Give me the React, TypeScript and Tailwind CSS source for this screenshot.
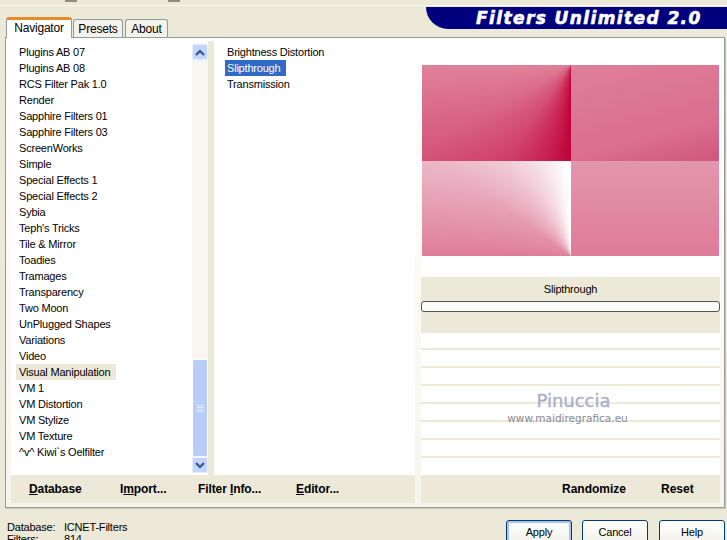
import React from "react";

const FILTERS = [
  "Plugins AB 07", "Plugins AB 08", "RCS Filter Pak 1.0", "Render", "Sapphire Filters 01", "Sapphire Filters 03",
  "ScreenWorks", "Simple", "Special Effects 1", "Special Effects 2", "Sybia", "Teph's Tricks", "Tile & Mirror",
  "Toadies", "Tramages", "Transparency", "Two Moon", "UnPlugged Shapes", "Variations", "Video",
  "Visual Manipulation", "VM 1", "VM Distortion", "VM Stylize", "VM Texture", "^v^ Kiwi`s Oelfilter",
];

const Chevron = ({ up }: { up?: boolean }) => (
  <svg width="10" height="7" viewBox="0 0 10 7" fill="none" stroke="#34558f" strokeWidth="2.2">
    <path d={up ? "M1 6l4-4 4 4" : "M1 1l4 4 4-4"} />
  </svg>
);

const ScrollBtn = ({ up }: { up?: boolean }) => (
  <div className="h-4 w-4 shrink-0 flex items-center justify-center rounded-[2px] border border-[#e8eefc] bg-[#c3d5fb]">
    <Chevron up={up} />
  </div>
);

const Tab = ({ label, active, className }: { label: string; active?: boolean; className: string }) =>
  active ? (
    <div className={`${className} h-[21px] relative z-10 -mb-px flex items-center justify-center rounded-t-[3px] border-x border-[#919b9c] border-t-[3px] border-t-[#e68b2c] bg-white pb-[2px]`}>
      {label}
    </div>
  ) : (
    <div className={`${className} h-[18px] flex items-center justify-center rounded-t-[3px] border-x border-t border-[#919b9c] bg-[#f3f2ea]`}>
      {label}
    </div>
  );

const Key = ({ children }: { children: React.ReactNode }) => <span className="underline">{children}</span>;

const Btn = ({ label, primary, className }: { label: string; primary?: boolean; className?: string }) => (
  <div
    className={`${className ?? ""} w-[66px] h-[24px] shrink-0 flex items-center justify-center rounded-[3px] border border-[#003c74] bg-[linear-gradient(#ffffff,#f2f1ea)] ${
      primary ? "shadow-[inset_0_0_0_2px_#a9c4ea]" : ""
    }`}
  >
    {label}
  </div>
);

export default function App() {
  return (
    <div className="w-[727px] h-[540px] overflow-hidden bg-[#ece9d8] text-[11px] tracking-[-0.2px] leading-4 text-black font-['Liberation_Sans',Arial,sans-serif]">
      {/* strip left of the previous window */}
      <div className="h-[7px] flex flex-col">
        <div className="h-[2px] flex">
          <div className="w-[65px]" />
          <div className="w-[12px] bg-[#8e8c80]" />
          <div className="w-[91px]" />
          <div className="w-[12px] bg-[#8e8c80]" />
        </div>
        <div className="h-[3px]" />
        <div className="h-px bg-[#f7f6ef]" />
      </div>

      <div className="h-[30px] flex justify-between items-start">
        <div className="h-[30px] pl-[6px] flex items-end gap-px text-[12px]">
          <Tab label="Navigator" active className="w-[66px]" />
          <Tab label="Presets" className="w-[50px]" />
          <Tab label="About" className="w-[43px] ml-px" />
        </div>
        <div className="w-[301px] h-[22px] rounded-bl-[24px] bg-[#00007f] flex items-center pl-[50px] text-white italic font-bold text-[17px] tracking-[1.4px] [-webkit-text-stroke:0.6px_white] font-['DejaVu_Sans',sans-serif] whitespace-nowrap">
          Filters Unlimited 2.0
        </div>
      </div>

      <div className="ml-[5px] w-[720px] h-[471px] border border-[#919b9c] shadow-[1px_1px_0_#c9c7b8] bg-[linear-gradient(#ffffff,#f6f5ec)] pl-[5px] pr-[4px] pt-[3px] flex gap-[6px]">
        <div className="w-[404px] flex flex-col">
          <div className="h-[434px] flex bg-white">
            <div className="w-[181px] pt-[3px] pl-[5px]">
              {FILTERS.map((f) => (
                <div
                  key={f}
                  className={`h-4 pl-[3px] whitespace-nowrap ${f === "Visual Manipulation" ? "bg-[#ece9d8] w-[100px]" : ""}`}
                >
                  {f}
                </div>
              ))}
            </div>
            <div className="w-[16px] mt-[3px] mb-[2px] flex flex-col bg-[#f7f6f0]">
              <ScrollBtn up />
              <div className="h-[299px]" />
              <div className="flex-1 rounded-[2px] border border-white bg-[#b9cdf9] flex flex-col items-center justify-center gap-px">
                <div className="w-[7px] h-px bg-[#e6edfd]" />
                <div className="w-[7px] h-px bg-[#e6edfd]" />
                <div className="w-[7px] h-px bg-[#e6edfd]" />
                <div className="w-[7px] h-px bg-[#e6edfd]" />
              </div>
              <ScrollBtn />
            </div>
            <div className="w-[6px] bg-[#ece9d8]" />
            <div className="flex-1 pt-[3px] pl-[11px]">
              <div className="h-4 pl-[2px]">Brightness Distortion</div>
              <div className="h-4 w-[61px] pl-[2px] bg-[#316ac5] text-white">Slipthrough</div>
              <div className="h-4 pl-[2px]">Transmission</div>
            </div>
          </div>
          <div className="h-[28px] bg-[#ece9d8] flex items-center font-bold text-[12px] tracking-[-0.1px]">
            <span className="ml-[18px] w-[91px]"><Key>D</Key>atabase</span>
            <span className="w-[78px]">I<Key>m</Key>port...</span>
            <span className="w-[98px]">Filter <Key>I</Key>nfo...</span>
            <span><Key>E</Key>ditor...</span>
          </div>
        </div>

        <div className="w-[299px] flex flex-col relative">
          <div className="h-[24px] bg-white" />
          <div className="mx-px h-[191px] grid grid-cols-[149px_148px] grid-rows-[96px_95px]">
            <div className="bg-[conic-gradient(from_180deg_at_100%_0%,#c00038_0deg,rgba(192,0,56,0.7)_12deg,rgba(192,0,56,0.3)_35deg,rgba(192,0,56,0.08)_60deg,rgba(192,0,56,0)_85deg,rgba(192,0,56,0)_360deg),linear-gradient(#e08099,#d65a80)]" />
            <div className="bg-[linear-gradient(165deg,#df7f9b,#da6e90_70%,#d0557c)]" />
            <div className="bg-[conic-gradient(from_270deg_at_100%_100%,rgba(255,255,255,0)_0deg,rgba(255,255,255,0.1)_35deg,rgba(255,255,255,0.35)_55deg,rgba(255,255,255,0.65)_72deg,rgba(255,255,255,0.97)_86deg,#ffffff_90deg,rgba(255,255,255,0)_90deg),linear-gradient(#eab0c3,#de7c9b)]" />
            <div className="bg-[linear-gradient(#e396ad,#de7b9a)]" />
          </div>
          <div className="h-[21px] bg-white" />
          <div className="h-[56px] bg-[#ece9d8] flex flex-col">
            <div className="h-6 text-center leading-6">Slipthrough</div>
            <div className="h-[11px] rounded-[3px] border border-[#555] bg-[#fbfbf8]" />
          </div>
          <div className="h-[142px] flex flex-col bg-white">
            {[0, 1, 2, 3, 4, 5, 6].map((i) => (
              <div key={i} className="h-[18px] shrink-0 pt-4 first:h-[17px] first:pt-[15px]">
                <div className="h-[2px] bg-[#ece9d8]" />
              </div>
            ))}
          </div>
          <div className="h-[28px] bg-[#ece9d8] flex items-center font-bold text-[12px] tracking-normal">
            <span className="ml-[141px] w-[99px]">Randomize</span>
            <span>Reset</span>
          </div>
          {/* watermark sits over the empty rows */}
          <div className="absolute left-[86px] top-[349px] w-[121px] flex flex-col items-center pointer-events-none font-['DejaVu_Sans',sans-serif] tracking-normal">
            <div className="h-[22px] pl-[12px] text-[18px] leading-[22px] text-[#a9adcb] [-webkit-text-stroke:0.3px_#a9adcb] whitespace-nowrap">Pinuccia</div>
            <div className="h-[13px] text-[10.5px] leading-[13px] text-[#8a8a94] whitespace-nowrap">www.maidiregrafica.eu</div>
          </div>
        </div>
      </div>

      <div className="flex justify-between items-start">
        <div className="pl-[7px] pt-[13px] flex flex-col leading-[12px]">
          <div className="flex"><span className="w-[57px]">Database:</span><span>ICNET-Filters</span></div>
          <div className="flex"><span className="w-[57px]">Filters:</span><span>814</span></div>
        </div>
        <div className="flex gap-[10px] pr-[2px] pt-[12px]">
          <Btn label="Apply" primary />
          <Btn label="Cancel" />
          <Btn label="Help" className="ml-px" />
        </div>
      </div>
    </div>
  );
}
